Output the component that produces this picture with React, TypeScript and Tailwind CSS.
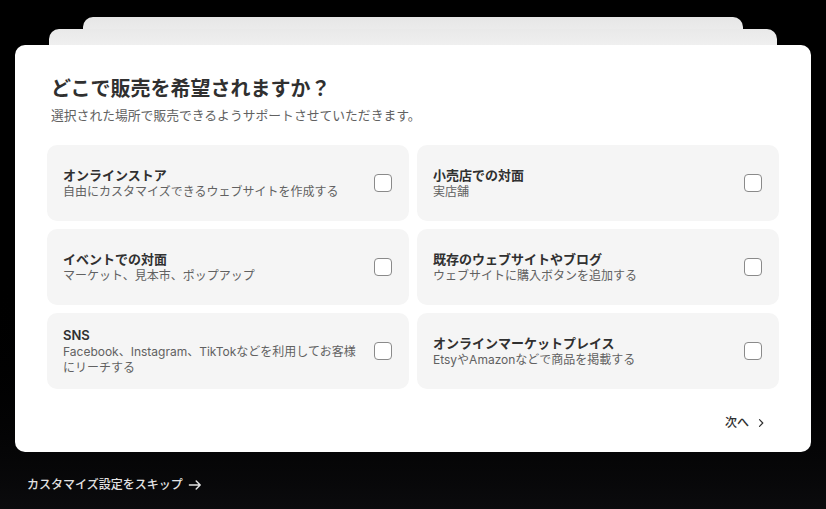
import React from "react";

const options = [
  { title: "オンラインストア", desc: "自由にカスタマイズできるウェブサイトを作成する" },
  { title: "小売店での対面", desc: "実店舗" },
  { title: "イベントでの対面", desc: "マーケット、見本市、ポップアップ" },
  { title: "既存のウェブサイトやブログ", desc: "ウェブサイトに購入ボタンを追加する" },
  { title: "SNS", desc: "Facebook、Instagram、TikTokなどを利用してお客様にリーチする" },
  { title: "オンラインマーケットプレイス", desc: "EtsyやAmazonなどで商品を掲載する" },
];

export default function App() {
  return (
    <div
      className="w-[826px] h-[509px] bg-gradient-to-b from-black via-black to-[#0b0b0d] overflow-hidden flex flex-col"
      style={{ fontFamily: '"Inter", "Noto Sans CJK JP", sans-serif' }}
    >
      <div className="relative mt-[45px] mx-[15px]">
        <div className="absolute left-[68px] right-[68px] top-[-28px] h-[40px] rounded-[10px] bg-gradient-to-b from-[#e6e6e6] to-[#f7f7f7]" />
        <div className="absolute left-[34px] right-[34px] top-[-16px] h-[40px] rounded-[10px] bg-gradient-to-b from-[#e9e9e9] to-[#f9f9f9]" />
        <div className="relative bg-white rounded-[10px] h-[407px] px-[32px] pt-[30px] flex flex-col">
          <h1 className="text-[20px] leading-[28px] font-semibold text-[#303030] pl-[4px]">どこで販売を希望されますか？</h1>
          <p className="text-[12.8px] leading-[18px] text-[#616161] mt-[4px] pl-[4px]">
            選択された場所で販売できるようサポートさせていただきます。
          </p>
          <div className="grid grid-cols-2 gap-[8px] mt-[20px]">
            {options.map((o) => (
              <div
                key={o.title}
                className="h-[76px] rounded-[10px] bg-[#f5f5f5] pl-[16px] pr-[16px] flex items-center justify-between"
              >
                <div className="flex flex-col max-w-[300px]">
                  <span className="text-[13px] leading-[17px] font-semibold text-[#303030]">{o.title}</span>
                  <span className="text-[12px] leading-[16px] text-[#616161]">{o.desc}</span>
                </div>
                <div className="w-[18px] h-[18px] rounded-[4px] border border-[#8a8a8a] bg-white shrink-0 mr-[1px]" />
              </div>
            ))}
          </div>
          <div className="flex justify-end mt-[20px] pr-[12px]">
            <button className="flex items-center gap-[6px] text-[12px] font-medium text-[#303030] h-[28px]">
              次へ
              <svg width="12" height="12" viewBox="0 0 20 20" fill="none">
                <path d="M7.5 4.5 13 10l-5.5 5.5" stroke="#303030" strokeWidth="2" strokeLinecap="round" strokeLinejoin="round" />
              </svg>
            </button>
          </div>
        </div>
      </div>
      <div className="mt-[24px] ml-[27px] flex items-center gap-[4px] text-[12px] font-medium text-[#e3e3e3]">
        カスタマイズ設定をスキップ
        <svg width="16" height="16" viewBox="0 0 20 20" fill="none">
          <path d="M3 10h13.5M11.5 5l5 5-5 5" stroke="#e3e3e3" strokeWidth="1.8" strokeLinecap="round" strokeLinejoin="round" />
        </svg>
      </div>
    </div>
  );
}
